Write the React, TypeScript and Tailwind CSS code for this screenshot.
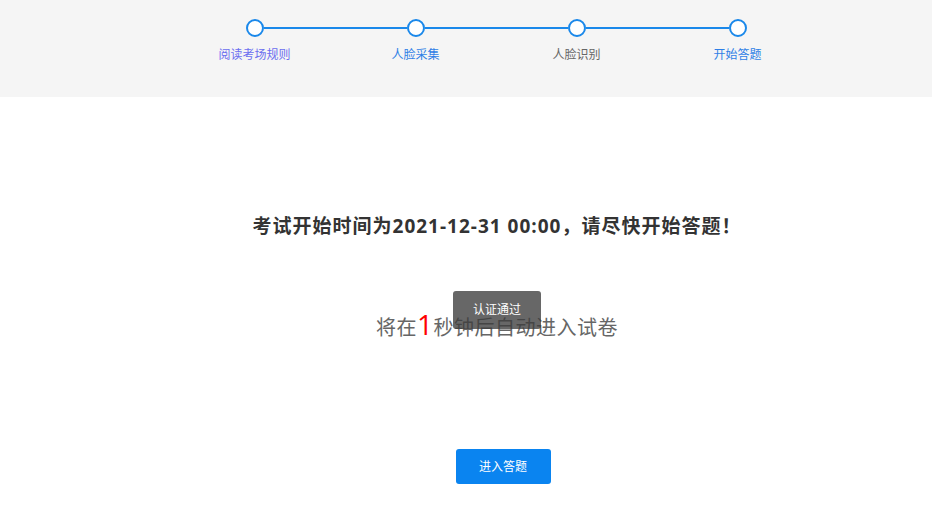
import React from "react";

const steps = [
  { label: "阅读考场规则", color: "text-[#6b6ef0]" },
  { label: "人脸采集", color: "text-[#2f7fe6]" },
  { label: "人脸识别", color: "text-[#666666]" },
  { label: "开始答题", color: "text-[#2f7fe6]" },
];

export default function App() {
  return (
    <div
      className="w-[932px] h-[525px] bg-white"
      style={{ fontFamily: '"Open Sans", "Noto Sans CJK SC", sans-serif' }}
    >
      {/* Steps */}
      <div className="h-[97px] bg-[#f5f5f5] pt-[19px]">
        <div className="ml-[174px] flex">
          {steps.map((s, i) => (
            <div key={i} className="w-[161px] flex flex-col items-center">
              <div className="w-full flex items-center h-[18px]">
                <div className={"flex-1 h-[2px] " + (i === 0 ? "" : "bg-[#1a88ea]")} />
                <div className="w-[18px] h-[18px] rounded-full border-2 border-[#1a88ea] bg-white" />
                <div className={"flex-1 h-[2px] " + (i === 3 ? "" : "bg-[#1a88ea]")} />
              </div>
              <div className={"mt-[10px] text-[12px] leading-[16px] " + s.color}>{s.label}</div>
            </div>
          ))}
        </div>
      </div>

      <div className="pl-[62px]">
        {/* Title */}
        <div className="pt-[116px] text-center text-[19px] leading-[26px] font-bold tracking-[1px] text-[#333333]">
          考试开始时间为2021-12-31 00:00，请尽快开始答题！
        </div>

        {/* Countdown */}
        <div className="relative mt-[70px] flex justify-center">
          <div className="text-[20px] leading-[30px] tracking-[0.5px] text-[#666666]">
            将在<span className="text-[28px] text-[#ff0000]">1</span>秒钟后自动进入试卷
          </div>
          <div className="absolute left-[391px] top-[-18px] w-[88px] h-[38px] rounded-[3px] bg-[rgba(60,60,60,0.78)] flex items-center justify-center text-white text-[12px]">
            认证通过
          </div>
        </div>

        {/* Button */}
        <div className="mt-[106px] flex justify-center pl-[12px]">
          <button className="w-[95px] h-[35px] rounded-[3px] bg-[#0a84f0] text-white text-[12px]">
            进入答题
          </button>
        </div>
      </div>
    </div>
  );
}
